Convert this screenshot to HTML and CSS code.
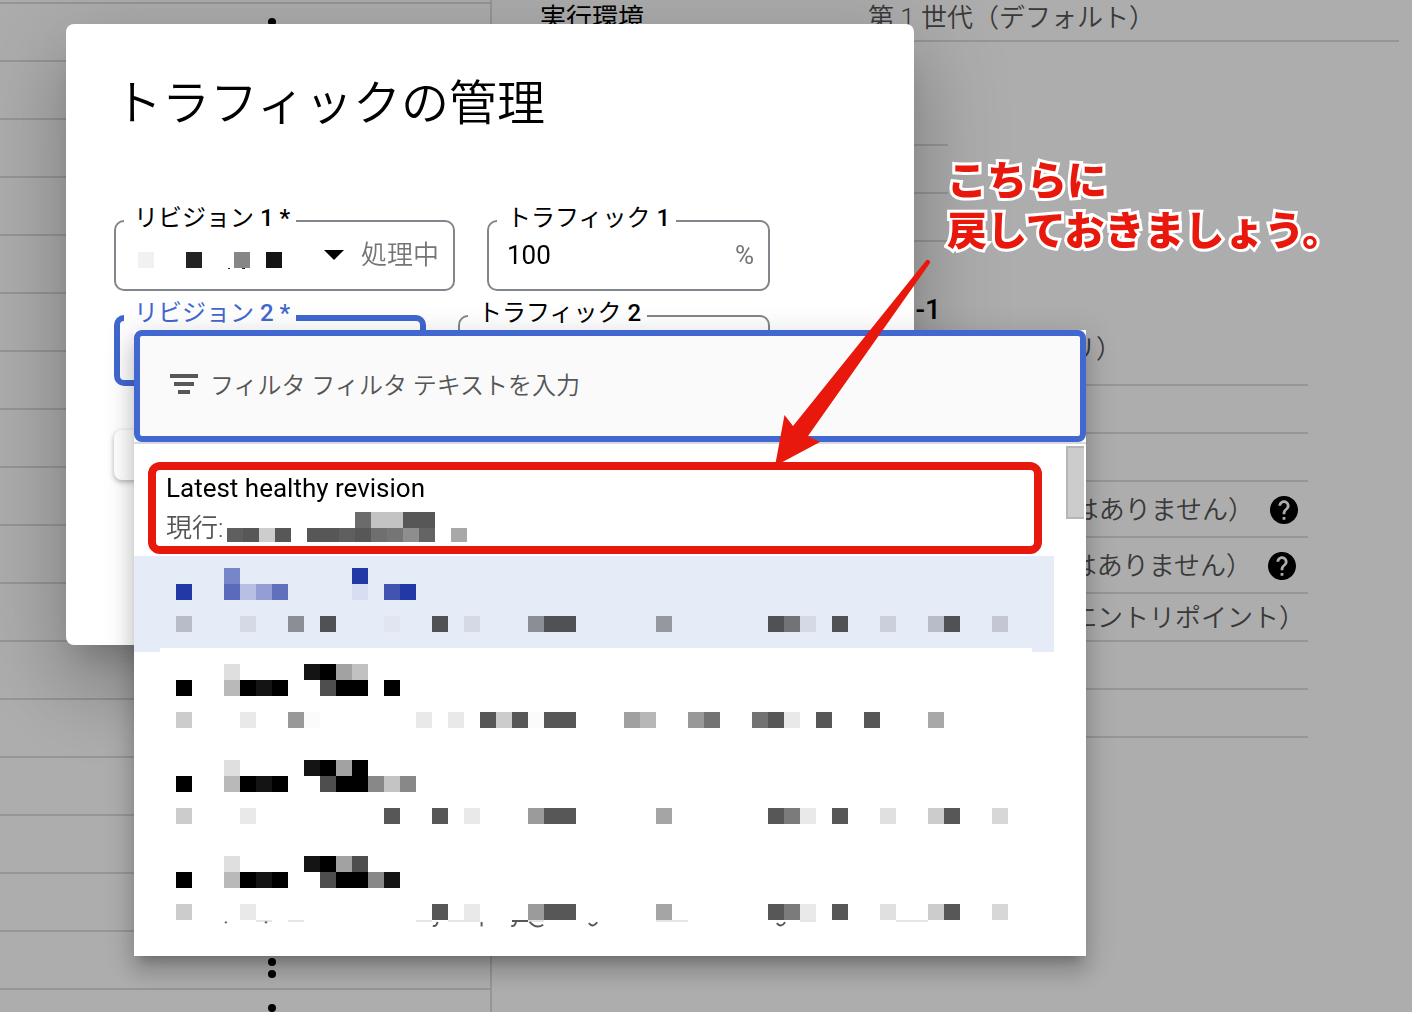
FILE: index.html
```html
<!DOCTYPE html>
<html lang="ja">
<head>
<meta charset="utf-8">
<title>トラフィックの管理</title>
<link rel="stylesheet" href="styles.css">
</head>
<body>
<svg class="defs" aria-hidden="true">
  <symbol id="more" viewBox="0 0 8 32"><circle cx="4" cy="4" r="4"/><circle cx="4" cy="16" r="4"/><circle cx="4" cy="28" r="4"/></symbol>
  <symbol id="help" viewBox="2 2 20 20"><path d="M12 2C6.48 2 2 6.48 2 12s4.48 10 10 10 10-4.48 10-10S17.52 2 12 2zm1 17h-2v-2h2v2zm2.07-7.75l-.9.92C13.45 12.9 13 13.5 13 15h-2v-.5c0-1.1.45-2.1 1.17-2.83l1.24-1.26c.37-.36.59-.86.59-1.41 0-1.1-.9-2-2-2s-2 .9-2 2H8c0-2.21 1.79-4 4-4s4 1.79 4 4c0 .88-.36 1.68-.93 2.25z"/></symbol>
</svg>

<div class="page">
  <ul class="revisions">
    <li><svg class="more"><use href="#more"/></svg></li>
    <li></li><li></li><li></li><li></li><li></li><li></li><li></li>
    <li></li><li></li><li></li><li></li><li></li><li></li><li></li><li></li>
    <li><svg class="more"><use href="#more"/></svg></li>
    <li><svg class="more"><use href="#more"/></svg></li>
  </ul>
  <div class="details">
    <dl class="general">
      <dt>実行環境</dt>
      <dd>第 1 世代（デフォルト）</dd>
    </dl>
    <div class="limits"><div class="row"></div><div class="row"></div><div class="row"></div></div>
    <section class="container">
      <h2>-1</h2>
      <p class="row row-image">リ）</p>
      <div class="row"></div>
      <div class="row"></div>
      <p class="row row-help">はありません）<svg class="help"><use href="#help"/></svg></p>
      <p class="row row-help row-args">はありません）<svg class="help"><use href="#help"/></svg></p>
      <p class="row row-command">エントリポイント）</p>
      <div class="row"></div>
      <div class="row"></div>
    </section>
  </div>
</div>

<div class="backdrop"></div>

<div class="dialog" role="dialog" aria-labelledby="dialog-title">
  <h1 id="dialog-title">トラフィックの管理</h1>
  <form>
    <div class="fields">
      <div class="field">
        <label for="rev1">リビジョン <b>1 *</b></label>
        <div class="picker">
          <svg class="value" viewBox="0 0 144 18" shape-rendering="crispEdges"><path fill="#f1f1f1" d="M0 0h16v16H0z"/><path fill="#232323" d="M48 0h16v16H48z"/><path fill="#868686" d="M96 0h16v16H96z"/><path fill="#151515" d="M128 0h16v16h-16z"/><path fill="#222" d="M90 16h2v1h-2zM104 16h3v1h-3z"/></svg>
          <svg class="caret" viewBox="0 0 20 10"><path d="M0 0h20L10 10z"/></svg>
          <select id="rev1"><option></option></select>
        </div>
        <span class="hint">処理中</span>
      </div>
      <div class="field field-percent">
        <label for="traffic1">トラフィック <b>1</b></label>
        <input id="traffic1" type="text" inputmode="numeric" value="100">
        <span class="hint hint-unit">%</span>
      </div>
    </div>
    <div class="fields">
      <div class="field field-active">
        <label for="rev2">リビジョン <b>2 *</b></label>
        <div class="picker"><select id="rev2"><option></option></select></div>
      </div>
      <div class="field field-half">
        <label for="traffic2">トラフィック <b>2</b></label>
        <input id="traffic2" type="text" inputmode="numeric">
      </div>
    </div>
    <button class="add" type="button" aria-label="追加"></button>
  </form>
</div>

<div class="menu">
  <div class="filter">
    <svg class="filter-icon" viewBox="0 0 28 20"><path d="M0 0h28v4H0zM4 8h20v4H4zM8 16h12v4H8z"/></svg>
    <input type="text" aria-label="フィルタ" placeholder="フィルタ フィルタ テキストを入力">
  </div>
  <ul class="options" role="listbox">
    <li class="option option-latest" role="option">
      <span>Latest healthy revision</span>
      <span class="current">現行:<svg class="current-name" viewBox="0 0 240 30" shape-rendering="crispEdges">
        <path fill="#6b6b6b" d="M128 0h16v16h-16z"/><path fill="#c3c3c3" d="M144 0h32v16h-32z"/><path fill="#575757" d="M176 0h32v16h-32zM16 16h16v14H16zM48 16h16v14H48zM80 16h32v14H80zM128 16h16v14h-16z"/>
        <path fill="#5f5f5f" d="M0 16h16v14H0zM112 16h16v14h-16z"/><path fill="#cdcdcd" d="M32 16h16v14H32z"/><path fill="#6f6f6f" d="M144 16h16v14h-16z"/><path fill="#757575" d="M160 16h16v14h-16z"/><path fill="#8e8e8e" d="M176 16h16v14h-16z"/><path fill="#646464" d="M192 16h16v14h-16z"/><path fill="#a8a8a8" d="M224 16h16v14h-16z"/>
      </svg></span>
    </li>
    <li class="option option-selected" role="option" aria-selected="true">
      <svg class="mosaic" viewBox="-1 0 54.5 5.25" shape-rendering="crispEdges">
        <path stroke="#7686c8" d="M3 .5h1"/><path stroke="#2238a4" d="M11 .5h1M0 1.5h1M14 1.5h1"/><path stroke="#5b6bbb" d="M3 1.5h1"/><path stroke="#b7bfe3" d="M4 1.5h1"/><path stroke="#939fd4" d="M5 1.5h1"/><path stroke="#5f70bd" d="M6 1.5h1"/><path stroke="#d8ddf1" d="M11 1.5h1"/><path stroke="#4254b0" d="M13 1.5h1"/>
        <path stroke="#b8bcc8" d="M0 3.5h1M47 3.5h1"/><path stroke="#d5d9e4" d="M4 3.5h1M18 3.5h1M39 3.5h1"/><path stroke="#8b8e97" d="M7 3.5h1M22 3.5h1"/><path stroke="#505155" d="M9 3.5h1M16 3.5h1M23 3.5h2M37 3.5h1M41 3.5h1M48 3.5h1"/><path stroke="#e1e5f0" d="M13 3.5h1"/><path stroke="#9598a1" d="M30 3.5h1"/><path stroke="#727379" d="M38 3.5h1"/><path stroke="#cbcfdb" d="M44 3.5h1"/><path stroke="#c4c7d1" d="M51 3.5h1"/>
        <path fill="#fff" d="M-1 5h54.5v.25H-1z"/>
      </svg>
    </li>
    <li class="option" role="option">
      <svg class="mosaic" viewBox="-1 0 54.5 5.25" shape-rendering="crispEdges">
        <path stroke="#dfdfdf" d="M3 .5h1"/><path stroke="#141414" d="M8 .5h1M5 1.5h1"/><path stroke="#000" d="M9 .5h1M0 1.5h1M4 1.5h1M6 1.5h1M10 1.5h2M13 1.5h1"/><path stroke="#a2a2a2" d="M10 .5h1"/><path stroke="#c1c1c1" d="M11 .5h1"/><path stroke="#b9b9b9" d="M3 1.5h1"/><path stroke="#4e4e4e" d="M9 1.5h1"/>
        <path stroke="#ccc" d="M0 3.5h1M20 3.5h1"/><path stroke="#e9e9e9" d="M4 3.5h1M15 3.5h1M17 3.5h1M38 3.5h1"/><path stroke="#999" d="M7 3.5h1M32 3.5h1"/><path stroke="#fbfbfb" d="M8 3.5h1M22 3.5h1"/><path stroke="#575757" d="M19 3.5h1M21 3.5h1M23 3.5h2M37 3.5h1M40 3.5h1M43 3.5h1"/><path stroke="#a0a0a0" d="M28 3.5h1"/><path stroke="#b7b7b7" d="M29 3.5h1"/><path stroke="#737373" d="M33 3.5h1M36 3.5h1"/><path stroke="#a8a8a8" d="M47 3.5h1"/>
      </svg>
    </li>
    <li class="option" role="option">
      <svg class="mosaic" viewBox="-1 0 54.5 5.25" shape-rendering="crispEdges">
        <path stroke="#dfdfdf" d="M3 .5h1"/><path stroke="#141414" d="M8 .5h1M5 1.5h1"/><path stroke="#000" d="M9 .5h1M11 .5h1M0 1.5h1M4 1.5h1M6 1.5h1M10 1.5h2"/><path stroke="#a2a2a2" d="M10 .5h1"/><path stroke="#b9b9b9" d="M3 1.5h1"/><path stroke="#4e4e4e" d="M9 1.5h1"/><path stroke="#888" d="M12 1.5h1M14 1.5h1"/><path stroke="#c4c4c4" d="M13 1.5h1"/>
        <path stroke="#ccc" d="M0 3.5h1M47 3.5h1"/><path stroke="#e9e9e9" d="M4 3.5h1M18 3.5h1M39 3.5h1"/><path stroke="#575757" d="M13 3.5h1M16 3.5h1M23 3.5h2M37 3.5h1M41 3.5h1M48 3.5h1"/><path stroke="#9b9b9b" d="M22 3.5h1"/><path stroke="#a5a5a5" d="M30 3.5h1"/><path stroke="#7b7b7b" d="M38 3.5h1"/><path stroke="#e0e0e0" d="M44 3.5h1"/><path stroke="#d7d7d7" d="M51 3.5h1"/>
      </svg>
    </li>
    <li class="option" role="option">
      <svg class="mosaic" viewBox="-1 0 54.5 5.25" shape-rendering="crispEdges">
        <path stroke="#dfdfdf" d="M3 .5h1"/><path stroke="#141414" d="M8 .5h1M5 1.5h1M13 1.5h1"/><path stroke="#000" d="M9 .5h1M0 1.5h1M4 1.5h1M6 1.5h1M10 1.5h2"/><path stroke="#a2a2a2" d="M10 .5h1"/><path stroke="#b9b9b9" d="M3 1.5h1"/><path stroke="#4e4e4e" d="M11 .5h1M9 1.5h1"/><path stroke="#888" d="M12 1.5h1"/>
        <path stroke="#ccc" d="M0 3.5h1M47 3.5h1"/><path stroke="#e9e9e9" d="M4 3.5h1M18 3.5h1M39 3.5h1"/><path stroke="#575757" d="M16 3.5h1M23 3.5h2M37 3.5h1M41 3.5h1M48 3.5h1"/><path stroke="#9b9b9b" d="M22 3.5h1"/><path stroke="#a5a5a5" d="M30 3.5h1"/><path stroke="#7b7b7b" d="M38 3.5h1"/><path stroke="#e0e0e0" d="M44 3.5h1"/><path stroke="#d7d7d7" d="M51 3.5h1"/>
        <path fill="#e6e6e6" d="M5 4h1v.125h-1zM7 4h1v.125h-1zM15 4h1v.125h-1zM17 4h2v.125h-2zM22 4h1v.125h-1zM30 4h2v.125h-2zM39 4h1v.125h-1zM45 4h2v.125h-2z"/><path fill="#575757" d="M21 4h1v.125h-1z"/>
        <g class="tails" shape-rendering="auto"><path d="M16.35 4.12q-.08.3-.3.25M19.1 4.12v.28M21.25 4.12q-.08.3-.3.25M22.1 4.12q.4.46.85.18M25.8 4.2q.26.32.52-.06M37.55 4.2q.26.32.52-.06"/><path d="M3.05 4.15h.13M5.55 4.15h.15"/></g>
      </svg>
    </li>
  </ul>
  <div class="thumb"></div>
</div>

<div class="highlight"></div>
<svg class="arrow" viewBox="0 0 164 212"><path d="M5 210L14.500 159 23 170 156.500 4Q160 3 160 7L38 180 50 186z"/></svg>
<p class="note">こちらに<br>戻しておきましょう。</p>
</body>
</html>
```
FILE: styles.css
```css
* { box-sizing: border-box; }

body {
  margin: 0;
  background: #fff;
  color: #000;
  font: 26px/36px Roboto, "Noto Sans CJK JP", sans-serif;
}

h1, h2, p, ul, dl, dd { margin: 0; padding: 0; }
ul { list-style: none; }
svg { display: block; flex: none; }
.defs { position: absolute; width: 0; height: 0; }

input, select, button {
  min-width: 0;
  padding: 0;
  border: 0;
  outline: 0;
  background: none;
  color: inherit;
  font: inherit;
}

/* Page behind the dialog */
.page {
  display: flex;
  height: 100vh;
  overflow: hidden;
  color: #5f5f5f;
}

.revisions {
  flex: 0 0 492px;
  padding-top: 2px;
  border-right: 2px solid #dedede;
}
.revisions li {
  display: flex;
  justify-content: center;
  height: 58px;
  padding: 14px 0 0 54px;
  border-top: 2px solid #dedede;
}
.more { width: 8px; height: 32px; }

.details { flex: 1; padding-left: 48px; }

.general {
  display: grid;
  grid-template-columns: 328px 1fr;
  height: 42px;
  margin-right: 13px;
  border-bottom: 2px solid #dedede;
}
.general dt { color: #000; }
.general dd, .row { color: #555; font-weight: 350; }

.row {
  display: flex;
  align-items: center;
  justify-content: flex-end;
  height: 48px;
  padding-top: 2px;
  border-bottom: 2px solid #dedede;
}
.limits { margin: 56px 464px 48px 0; }
.container { margin-right: 104px; }
.container h2 {
  padding-right: 367px;
  color: #000;
  font-size: 28px;
  font-weight: 500;
  line-height: 40px;
  text-align: right;
}
.row-image { height: 56px; padding: 0 186px 16px 0; }
.row-help { gap: 16px; height: 56px; padding-right: 10px; }
.row-args { padding-right: 12px; }
.row-command { padding-right: 3px; }
.help { width: 28px; height: 28px; fill: #000; }

.backdrop {
  position: fixed;
  inset: 0;
  background: rgba(0, 0, 0, .32);
}

/* Dialog */
.dialog {
  position: absolute;
  top: 24px;
  left: 66px;
  right: 498px;
  padding: 48px 48px 165px;
  border-radius: 8px;
  background: #fff;
  box-shadow: 0 22px 30px -14px rgba(0, 0, 0, .2), 0 48px 76px 6px rgba(0, 0, 0, .14), 0 18px 92px 16px rgba(0, 0, 0, .12);
}
.dialog h1 {
  margin-bottom: 84px;
  font-size: 48px;
  font-weight: 350;
  line-height: 64px;
}
.fields {
  display: flex;
  gap: 32px;
  margin: 0 96px 24px 0;
}
.field {
  position: relative;
  display: flex;
  flex: 1;
  align-items: center;
  height: 71px;
  padding: 0 14px 2px 18px;
  border: 2px solid #80868b;
  border-radius: 10px;
}
.field label {
  position: absolute;
  top: -20px;
  left: 8px;
  padding: 0 6px 0 10px;
  background: #fff;
  font-size: 24px;
  line-height: 32px;
}
.field label b { font-weight: 500; }
.field input { flex: 1; width: 0; }
.field-percent { flex: 0 0 283px; }
.field-half { flex: 0 0 312px; }
.field-active { border: 6px solid #4167d0; }
.field-active label { top: -24px; left: 4px; color: #4167d0; }
.hint { color: #757575; font-weight: 350; }
.hint-unit { font-weight: 400; }

.picker {
  display: grid;
  flex: 1;
  grid-template-columns: 1fr 20px;
  align-items: center;
  margin: 0 17px 0 4px;
}
.picker select {
  grid-area: 1 / 1 / 2 / 3;
  width: 100%;
  height: 36px;
  appearance: none;
}
.value { grid-area: 1 / 1; width: 144px; height: 18px; margin-top: 13px; }
.caret { grid-area: 1 / 2; width: 20px; height: 10px; }

.add {
  display: block;
  width: 140px;
  height: 50px;
  margin-top: 44px;
  border-radius: 8px;
  background: #fff;
  box-shadow: 0 2px 4px rgba(0, 0, 0, .2), 0 2px 6px 2px rgba(0, 0, 0, .08);
}

/* Revision menu */
.menu {
  position: absolute;
  top: 330px;
  left: 134px;
  right: 326px;
  background: #fff;
  box-shadow: 0 10px 10px -6px rgba(0, 0, 0, .2), 0 16px 20px 2px rgba(0, 0, 0, .14), 0 6px 28px 4px rgba(0, 0, 0, .12);
}
.filter {
  display: flex;
  align-items: center;
  gap: 12px;
  height: 112px;
  padding: 0 30px;
  border: 6px solid #4167d0;
  border-radius: 8px;
  background: #fafafa;
}
.filter-icon { width: 28px; height: 20px; margin-bottom: 4px; fill: #575757; }
.filter input { flex: 1; font-size: 24px; font-weight: 350; }
.filter input::placeholder { color: #555; opacity: 1; }

.options {
  padding: 16px 32px 16px 0;
  border-top: 2px solid #dadada;
}
.option { height: 96px; padding: 12px 22px 0 26px; }
.option-latest {
  display: flex;
  flex-direction: column;
  gap: 4px;
  padding: 10px 32px 0;
}
.option-selected { background: #e5ecf8; }
.current { display: flex; gap: 4px; color: #555; font-weight: 350; }
.current-name { width: 240px; height: 30px; margin-top: 2px; }
.mosaic { width: 872px; height: 84px; }
.tails path { fill: none; stroke: #575757; stroke-width: .12; }

.thumb {
  position: absolute;
  top: 116px;
  right: 2px;
  width: 18px;
  height: 73px;
  border: 2px solid #b6b6b6;
  border-right: 0;
  background: #ccc;
}

/* Annotations */
.highlight {
  position: absolute;
  top: 462px;
  left: 148px;
  right: 370px;
  height: 92px;
  border: 8px solid #e8190c;
  border-radius: 12px;
}
.arrow {
  position: absolute;
  top: 256px;
  left: 770px;
  width: 164px;
  height: 212px;
  fill: #e8190c;
}
.note {
  position: absolute;
  top: 157px;
  left: 947px;
  color: #e8190c;
  font-size: 40px;
  font-weight: 900;
  line-height: 50px;
  white-space: nowrap;
  -webkit-text-stroke: 6px #fff;
  paint-order: stroke fill;
}
```
